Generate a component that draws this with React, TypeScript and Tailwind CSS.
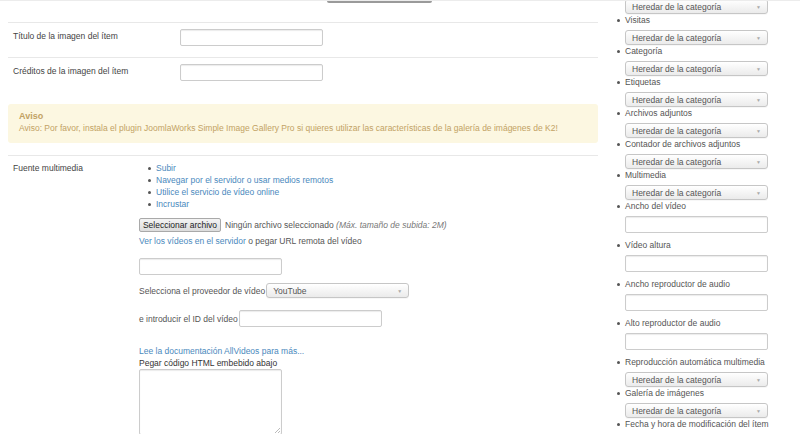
import React from 'react'

const HEREDAR = 'Heredar de la categoría'

function FakeSelect({ value, width = 'w-[143px]' }: { value: string; width?: string }) {
  return (
    <div
      className={`flex h-[15px] ${width} items-center justify-between rounded-[3px] border border-[#c6c6c6] bg-linear-to-b from-white to-[#ebebeb] px-[6px] text-[#555] shadow-[0_1px_0_rgba(0,0,0,0.03)]`}
    >
      <span>{value}</span>
      <span className="text-[5px] text-[#aaa]">▼</span>
    </div>
  )
}

function TextInput({ className = '' }: { className?: string }) {
  return (
    <div
      className={`h-[17px] w-[143px] rounded-[2px] border border-[#ccc] bg-white shadow-[inset_0_1px_1px_rgba(0,0,0,0.08)] ${className}`}
    />
  )
}

function Bullet() {
  return <span className="mr-[5px] inline-block h-[3px] w-[3px] shrink-0 rounded-full bg-[#555]" />
}

const selectItems = ['Visitas', 'Categoría', 'Etiquetas', 'Archivos adjuntos', 'Contador de archivos adjuntos', 'Multimedia']
const inputItems = ['Ancho del vídeo', 'Vídeo altura', 'Ancho reproductor de audio', 'Alto reproductor de audio']

export default function App() {
  return (
    <div className="flex h-[434px] w-[800px] overflow-hidden border-t border-[#ececec] bg-white font-['Liberation_Sans',Arial,sans-serif] text-[8.5px] leading-[12px] text-[#555]">
      {/* Left column */}
      <div className="w-[598px] shrink-0 pl-[8px]">
        {/* top bar with the edge of a button */}
        <div className="h-[22px] border-b border-[#e8e8e8]">
          <div className="ml-[319px] h-[2px] w-[105px] rounded-b-[2px] bg-[#9a9a9a]" />
        </div>

        {/* Image title */}
        <div className="flex h-[35px] items-start border-b border-[#e8e8e8] pt-[6px] pl-[5px]">
          <span className="mt-[1px] w-[167px] text-[#444]">Título de la imagen del ítem</span>
          <TextInput />
        </div>

        {/* Image credits */}
        <div className="flex h-[46px] items-start pt-[6px] pl-[5px]">
          <span className="mt-[1px] w-[167px] text-[#444]">Créditos de la imagen del ítem</span>
          <TextInput />
        </div>

        {/* Notice */}
        <div className="h-[39px] rounded-[3px] bg-[#fcf7e1] pt-[6px] pl-[11px] text-[#c2a264]">
          <div className="text-[9px] font-bold">Aviso</div>
          <div>
            Aviso: Por favor, instala el plugin JoomlaWorks Simple Image Gallery Pro si quieres utilizar las características de la galería de imágenes de K2!
          </div>
        </div>

        <div className="mt-[12px] border-b border-[#e8e8e8]" />

        {/* Media source */}
        <div className="flex pt-[6px] pl-[5px]">
          <span className="w-[126px] text-[#444]">Fuente multimedia</span>
          <div className="flex flex-col">
            <ul className="ml-[9px] text-[#4a89bd]">
              {['Subir', 'Navegar por el servidor o usar medios remotos', 'Utilice el servicio de vídeo online', 'Incrustar'].map(t => (
                <li key={t} className="flex items-center">
                  <Bullet />
                  {t}
                </li>
              ))}
            </ul>

            <div className="mt-[8px] flex items-center">
              <div className="flex h-[14px] w-[82px] items-center justify-center rounded-[2px] border border-[#a9a9a9] bg-linear-to-b from-[#f4f4f4] to-[#dcdcdc] text-[#222]">
                Seleccionar archivo
              </div>
              <span className="ml-[4px]">
                Ningún archivo seleccionado <i className="text-[#777]">(Máx. tamaño de subida: 2M)</i>
              </span>
            </div>

            <div className="mt-[3px]">
              <span className="text-[#4a89bd]">Ver los vídeos en el servidor</span> o pegar URL remota del vídeo
            </div>

            <TextInput className="mt-[11px]" />

            <div className="mt-[8px] flex items-center">
              <span className="mr-[1px]">Selecciona el proveedor de vídeo</span>
              <FakeSelect value="YouTube" />
            </div>

            <div className="mt-[12px] flex items-center">
              <span className="mr-[1px]">e introducir el ID del vídeo</span>
              <TextInput />
            </div>

            <div className="mt-[18px] text-[#4a89bd]">Lee la documentación AllVideos para más...</div>
            <div className="text-[#333]">Pegar código HTML embebido abajo</div>
            <div className="relative h-[66px] w-[143px] rounded-[2px] border border-[#ccc] bg-white shadow-[inset_0_1px_1px_rgba(0,0,0,0.08)]">
              <span className="absolute right-[1px] bottom-[1px] h-[5px] w-[5px] bg-[linear-gradient(135deg,transparent_45%,#bbb_45%,#bbb_55%,transparent_55%,transparent_70%,#bbb_70%,#bbb_80%,transparent_80%)]" />
            </div>
          </div>
        </div>
      </div>

      {/* Right column */}
      <div className="ml-[19px] flex-1">
        <ul className="-mt-[2px]">
          <li className="pl-[8px]">
            <FakeSelect value={HEREDAR} />
          </li>
          {selectItems.map(label => (
            <li key={label}>
              <div className="flex items-center">
                <Bullet />
                {label}
              </div>
              <div className="mt-[4px] pl-[8px]">
                <FakeSelect value={HEREDAR} />
              </div>
            </li>
          ))}
          {inputItems.map(label => (
            <li key={label} className="mb-[6px]">
              <div className="flex items-center">
                <Bullet />
                {label}
              </div>
              <div className="mt-[4px] pl-[8px]">
                <TextInput />
              </div>
            </li>
          ))}
          {['Reproducción automática multimedia', 'Galería de imágenes'].map(label => (
            <li key={label}>
              <div className="flex items-center">
                <Bullet />
                {label}
              </div>
              <div className="mt-[4px] pl-[8px]">
                <FakeSelect value={HEREDAR} />
              </div>
            </li>
          ))}
          <li className="flex items-center">
            <Bullet />
            Fecha y hora de modificación del ítem
          </li>
        </ul>
      </div>
    </div>
  )
}
